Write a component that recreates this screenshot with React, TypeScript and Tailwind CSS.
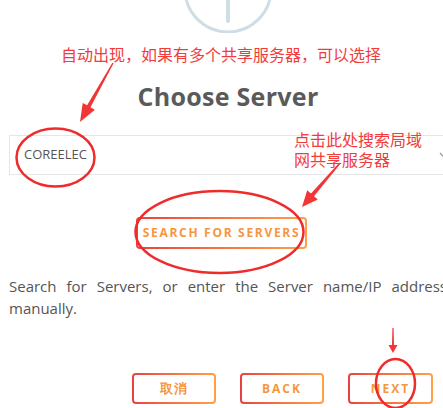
import React from "react";

const ui = { fontFamily: '"Open Sans", "Noto Sans", sans-serif' };
const cjk = { fontFamily: '"Noto Sans CJK SC", "Noto Sans", sans-serif' };

const GradientButton = ({
  label,
  className,
  textClass,
}: {
  label: string;
  className: string;
  textClass: string;
}) => (
  <div
    className={`rounded-[4px] bg-gradient-to-r from-[#e8403e] to-[#ffa047] p-[2px] ${className}`}
  >
    <div className="flex h-full w-full items-center justify-center rounded-[2px] bg-white">
      <span className={`font-bold text-[#f6963f] ${textClass}`}>{label}</span>
    </div>
  </div>
);

// red markup drawn on top of the screenshot
const Annotations = () => (
  <>
    <svg
      className="pointer-events-none absolute inset-0"
      width={443}
      height={408}
      viewBox="0 0 443 408"
    >
      <g fill="none" stroke="#ee2c2c" strokeWidth={2.5}>
        <ellipse cx={55.5} cy={157.5} rx={39} ry={29} />
        <ellipse cx={219.5} cy={232} rx={84} ry={41} />
        <ellipse cx={395.5} cy={383.5} rx={19.5} ry={24.5} />
      </g>
      <g fill="#f23636">
        <polygon points="113.6,63.3 90.5,107.3 94.9,109.7 80,122 82.7,102.9 87.1,105.3 112.4,62.7" />
        <polygon points="340.6,163.4 314,196.2 317.8,199.5 302,207 307.2,190.3 311,193.6 339.4,162.6" />
        <polygon points="393.6,328 394,345 397.5,345 393,353 388.5,345 392,345 392.4,328" />
      </g>
    </svg>
    <div
      className="absolute left-[61px] top-[44px] whitespace-nowrap text-[16px] leading-[20px] text-[#f23b3b]"
      style={cjk}
    >
      自动出现，如果有多个共享服务器，可以选择
    </div>
    <div
      className="absolute left-[294px] top-[129px] text-[16px] leading-[20px] text-[#f23b3b]"
      style={cjk}
    >
      <div className="whitespace-nowrap">点击此处搜索局域</div>
      <div className="whitespace-nowrap">网共享服务器</div>
    </div>
  </>
);

export default function App() {
  return (
    <div className="relative h-[408px] w-[443px] overflow-hidden bg-white" style={ui}>
      <div className="flex w-[456px] flex-col px-[9px]">
        {/* step icon, mostly scrolled out of view */}
        <div className="flex h-[33px] justify-center overflow-visible">
          <svg width={92} height={92} viewBox="0 0 92 92" className="mt-[-59px] shrink-0">
            <circle cx={46} cy={48} r={43} fill="none" stroke="#cfdde5" strokeWidth={3} />
            <line x1={46} y1={0} x2={46} y2={80} stroke="#cfdde5" strokeWidth={4} strokeLinecap="round" />
          </svg>
        </div>

        <h1 className="mt-[46px] text-center text-[25px] font-bold leading-[34px] tracking-[0.3px] text-[#5a5a5a]">
          Choose Server
        </h1>

        <div className="relative mt-[22px] flex h-[40px] items-center border border-[#e6e6e6] pl-[14px]">
          <span className="text-[13px] text-[#555555]">COREELEC</span>
          <svg
            className="absolute right-[-2px] top-[16px]"
            width={9}
            height={6}
            viewBox="0 0 9 6"
          >
            <path d="M1 1 L4.5 5 L8 1" fill="none" stroke="#9a9a9a" strokeWidth={1.2} />
          </svg>
        </div>

        <GradientButton
          label="SEARCH FOR SERVERS"
          className="ml-[127px] mt-[42px] h-[32px] w-[171px]"
          textClass="text-[12px] tracking-[1.7px]"
        />

        <p className="mt-[26px] text-justify text-[15px] leading-[22px] text-[#555555]">
          Search for Servers, or enter the Server name/IP address manually.
        </p>

        <div className="mt-[54px] flex justify-end gap-[24px] pr-[14px]">
          <GradientButton
            label="取消"
            className="h-[31px] w-[84px]"
            textClass="text-[13px] tracking-[1px]"
          />
          <GradientButton
            label="BACK"
            className="h-[31px] w-[84px]"
            textClass="text-[12px] tracking-[2px]"
          />
          <GradientButton
            label="NEXT"
            className="h-[31px] w-[85px]"
            textClass="text-[12px] tracking-[2px]"
          />
        </div>
      </div>
      <Annotations />
    </div>
  );
}
